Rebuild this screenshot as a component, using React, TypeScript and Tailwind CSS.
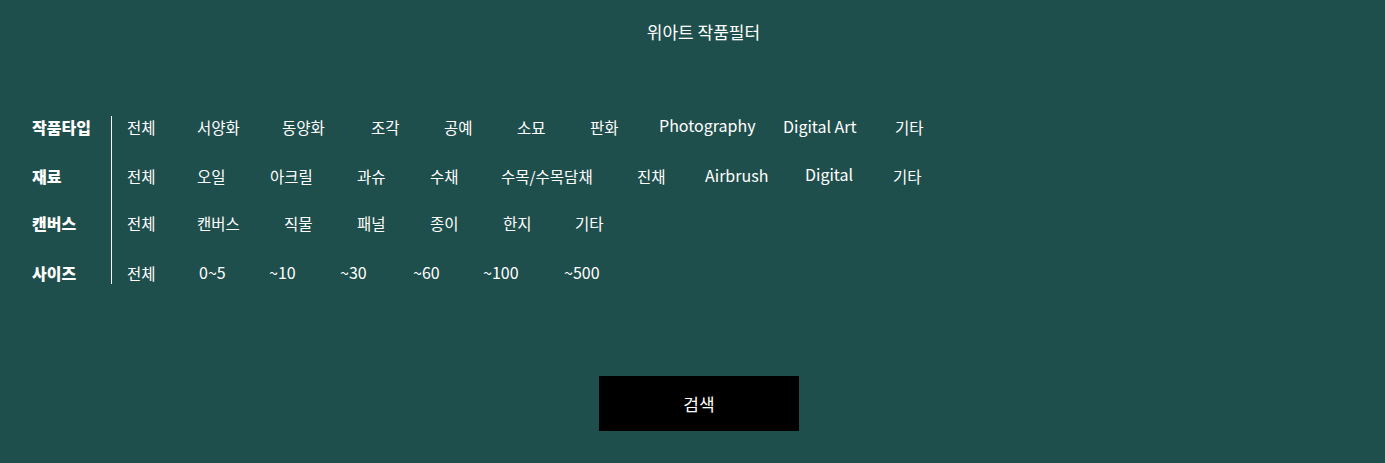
import React from 'react';

type Item = { label: string; w: string; up?: boolean };

const rows: { title: string; mt: string; items: Item[] }[] = [
  {
    title: '작품타입',
    mt: 'mt-0',
    items: [
      { label: '전체', w: 'w-[70px]' },
      { label: '서양화', w: 'w-[85px]' },
      { label: '동양화', w: 'w-[89px]' },
      { label: '조각', w: 'w-[73px]' },
      { label: '공예', w: 'w-[73px]' },
      { label: '소묘', w: 'w-[73px]' },
      { label: '판화', w: 'w-[69px]' },
      { label: 'Photography', w: 'w-[124px]', up: true },
      { label: 'Digital Art', w: 'w-[112px]' },
      { label: '기타', w: 'w-auto' },
    ],
  },
  {
    title: '재료',
    mt: 'mt-[27px]',
    items: [
      { label: '전체', w: 'w-[70px]' },
      { label: '오일', w: 'w-[73px]' },
      { label: '아크릴', w: 'w-[87px]' },
      { label: '과슈', w: 'w-[73px]' },
      { label: '수채', w: 'w-[71px]' },
      { label: '수목/수목담채', w: 'w-[136px]' },
      { label: '진채', w: 'w-[68px]' },
      { label: 'Airbrush', w: 'w-[100px]' },
      { label: 'Digital', w: 'w-[88px]', up: true },
      { label: '기타', w: 'w-auto' },
    ],
  },
  {
    title: '캔버스',
    mt: 'mt-[25px]',
    items: [
      { label: '전체', w: 'w-[70px]' },
      { label: '캔버스', w: 'w-[87px]' },
      { label: '직물', w: 'w-[73px]' },
      { label: '패널', w: 'w-[73px]' },
      { label: '종이', w: 'w-[73px]' },
      { label: '한지', w: 'w-[72px]' },
      { label: '기타', w: 'w-auto' },
    ],
  },
  {
    title: '사이즈',
    mt: 'mt-[28px]',
    items: [
      { label: '전체', w: 'w-[72px]' },
      { label: '0~5', w: 'w-[70px]' },
      { label: '~10', w: 'w-[71px]' },
      { label: '~30', w: 'w-[73px]' },
      { label: '~60', w: 'w-[70px]' },
      { label: '~100', w: 'w-[81px]' },
      { label: '~500', w: 'w-auto' },
    ],
  },
];

const hangul = /[가-힣]/;

export default function App() {
  return (
    <div
      className="w-[1385px] h-[463px] bg-[#1f4f4c] text-white overflow-hidden"
      style={{ fontFamily: '"Noto Sans CJK KR", "Noto Sans", sans-serif' }}
    >
      {/* Title */}
      <div className="pt-[19px] pl-[22px] text-center text-[17px] leading-[26px]">위아트 작품필터</div>

      {/* Filter table */}
      <div className="mt-[71px] pl-[32px] flex">
        <div className="w-[79px] flex flex-col">
          {rows.map((row) => (
            <div key={row.title} className={`${row.mt} h-[22px] leading-[22px] text-[16px] font-black`}>
              {row.title}
            </div>
          ))}
        </div>
        <div className="border-l border-white pl-[15px] flex flex-col">
          {rows.map((row) => (
            <div key={row.title} className={`${row.mt} h-[22px] flex items-center leading-[22px]`}>
              {row.items.map((item, i) => (
                <span
                  key={i}
                  className={`${item.w} shrink-0 whitespace-nowrap ${
                    hangul.test(item.label) ? 'text-[15.5px]' : item.up ? 'text-[16px] -mt-[4px]' : 'text-[16px] -mt-[2px]'
                  }`}
                >
                  {item.label}
                </span>
              ))}
            </div>
          ))}
        </div>
      </div>

      {/* Search button */}
      <div className="mt-[92px] flex justify-center">
        <button className="w-[200px] h-[55px] bg-black text-white text-[17px] ml-[13px]">검색</button>
      </div>
    </div>
  );
}
